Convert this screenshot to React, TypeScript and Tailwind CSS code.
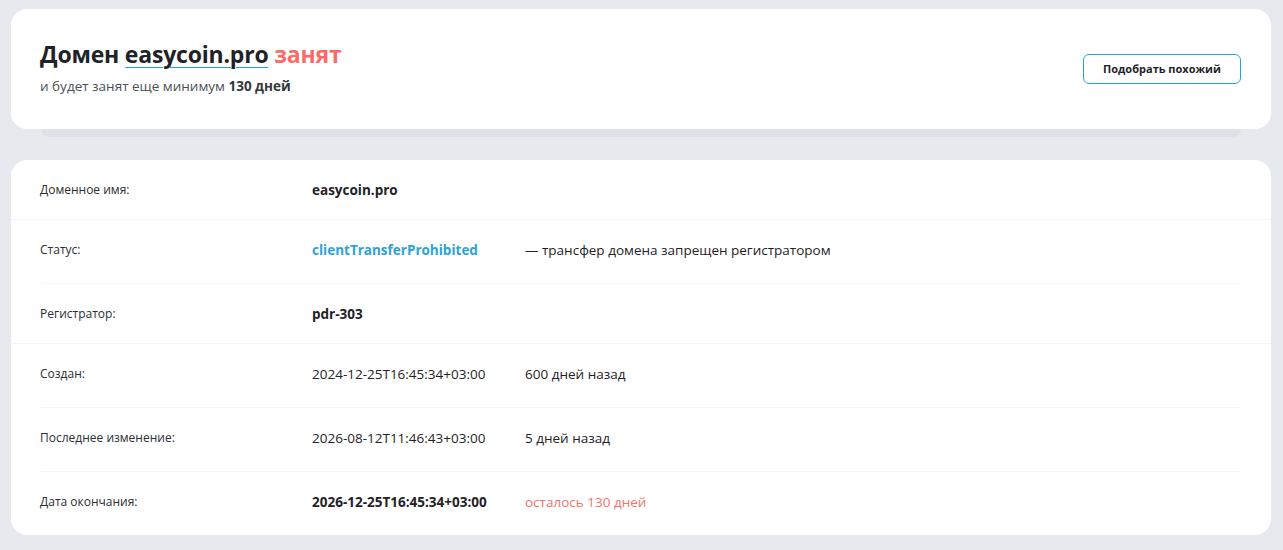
const font = { fontFamily: '"Open Sans", "Noto Sans", sans-serif' };

type Row = {
  label: string;
  value: string;
  extra?: string;
  valueClass?: string;
  extraClass?: string;
  h: string;
  line?: 'full' | 'inset' | 'none';
};

const rows: Row[] = [
  { label: 'Доменное имя:', value: 'easycoin.pro', valueClass: 'font-bold', h: 'h-[59px]', line: 'full' },
  {
    label: 'Статус:',
    value: 'clientTransferProhibited',
    valueClass: 'font-bold text-[#2aa4d8]',
    extra: '— трансфер домена запрещен регистратором',
    h: 'h-[63px]',
    line: 'inset',
  },
  { label: 'Регистратор:', value: 'pdr-303', valueClass: 'font-bold', h: 'h-[59px]', line: 'full' },
  { label: 'Создан:', value: '2024-12-25T16:45:34+03:00', extra: '600 дней назад', h: 'h-[63px]', line: 'inset' },
  {
    label: 'Последнее изменение:',
    value: '2026-08-12T11:46:43+03:00',
    extra: '5 дней назад',
    h: 'h-[63px]',
    line: 'inset',
  },
  {
    label: 'Дата окончания:',
    value: '2026-12-25T16:45:34+03:00',
    valueClass: 'font-bold',
    extra: 'осталось 130 дней',
    extraClass: 'text-[#f4726b]',
    h: 'h-[63px]',
    line: 'none',
  },
];

export default function App() {
  return (
    <div className="min-h-[550px] w-[1283px] bg-[#e6eaee] pl-[11px] pr-[12px] pt-[9px] text-[#1f2226]" style={font}>
      {/* header card with the stacked strip under it */}
      <div>
        <div className="flex h-[120px] items-center justify-between rounded-2xl bg-white pl-[29px] pr-[30px]">
          <div className="pb-[4px]">
            <h1 className="text-[23px] font-bold leading-[32px] tracking-[-0.2px]">
              Домен{' '}
              <span className="underline decoration-[#2aa4d8] decoration-1 underline-offset-[4px]">easycoin.pro</span>{' '}
              <span className="text-[#fb6a67]">занят</span>
            </h1>
            <p className="mt-[6px] text-[13.5px] leading-5 text-[#4a4f55]">
              и будет занят еще минимум <span className="font-bold text-[#33383d]">130 дней</span>
            </p>
          </div>
          <button className="h-[30px] w-[158px] rounded-md border border-[#2aa4d8] bg-white text-[11px] font-bold text-[#1f2226]">
            Подобрать похожий
          </button>
        </div>
        <div className="mx-[30px] h-[8px] rounded-b-xl bg-[#dce2e8]" />
      </div>

      {/* whois details */}
      <div className="mt-[23px] rounded-2xl bg-white">
        {rows.map((r) => (
          <div key={r.label}>
            <div className={`flex items-start pl-[29px] pt-5 ${r.h}`}>
              <div className="w-[272px] pt-[1px] text-[12px] leading-[18px] text-[#2a2e33]">{r.label}</div>
              <div className={`w-[213px] text-[13.5px] leading-5 ${r.valueClass ?? ''}`}>{r.value}</div>
              {r.extra && <div className={`text-[13.5px] leading-5 ${r.extraClass ?? ''}`}>{r.extra}</div>}
            </div>
            {r.line === 'full' && <div className="h-px bg-[#f1f3f5]" />}
            {r.line === 'inset' && <div className="mx-[30px] h-px bg-[#f1f3f5]" />}
          </div>
        ))}
      </div>
    </div>
  );
}
